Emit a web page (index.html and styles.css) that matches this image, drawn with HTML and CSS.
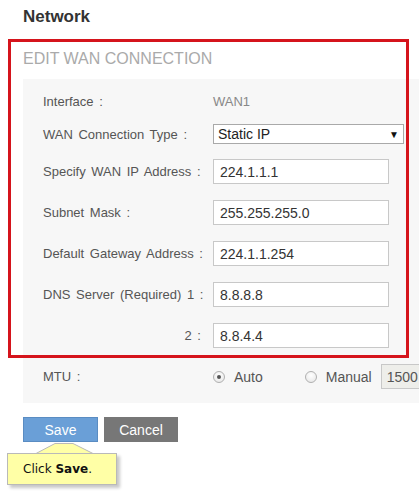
FILE: index.html
```html
<!DOCTYPE html>
<html lang="en">
<head>
  <meta charset="UTF-8" />
  <title>Network ‒ Edit WAN Connection</title>
  <link rel="stylesheet" href="styles.css">
</head>

<body>
  <div class="page">
    <!-- PAGE TITLE -->
    <h1 class="page-title">Network</h1>

    <!-- EDIT WAN FORM -->
    <div class="wan-section">
      <h2 class="section-title">EDIT WAN CONNECTION</h2>

      <div class="panel">
        <div class="row row-info">
          <span class="label">Interface :</span>
          <span class="value">WAN1</span>
        </div>

        <div class="row row-select">
          <span class="label">WAN Connection Type :</span>
          <div class="select">
            <span>Static IP</span>
            <span class="select-arrow">&#9660;</span>
          </div>
        </div>

        <div class="row">
          <span class="label">Specify WAN IP Address :</span>
          <input class="field" type="text" value="224.1.1.1" />
        </div>

        <div class="row">
          <span class="label">Subnet Mask :</span>
          <input class="field" type="text" value="255.255.255.0" />
        </div>

        <div class="row">
          <span class="label">Default Gateway Address :</span>
          <input class="field" type="text" value="224.1.1.254" />
        </div>

        <div class="row">
          <span class="label">DNS Server (Required) 1 :</span>
          <input class="field" type="text" value="8.8.8.8" />
        </div>

        <div class="row">
          <span class="label label-right">2 :</span>
          <input class="field" type="text" value="8.8.4.4" />
        </div>

        <div class="row row-last">
          <span class="label">MTU :</span>
          <span class="radio checked"></span>
          <span class="radio-text radio-auto">Auto</span>
          <span class="radio"></span>
          <span class="radio-text">Manual</span>
          <input class="field field-mtu" type="text" value="1500" />
        </div>
      </div>

      <!-- red highlight around the edited block -->
      <div class="highlight"></div>
    </div>

    <!-- ACTIONS -->
    <div class="actions">
      <button class="btn btn-save">Save</button>
      <button class="btn btn-cancel">Cancel</button>

      <!-- tutorial callout -->
      <div class="callout">
        <svg class="callout-arrow" width="60" height="12" viewBox="0 0 60 12">
          <polygon points="1,11.5 20,1.5 38,1.5 58,11.5" fill="#ffffa6" stroke="#b9b9b9" stroke-width="1" />
        </svg>
        Click <strong>Save</strong>.
      </div>
    </div>
  </div>
</body>
</html>
```

FILE: styles.css
```css
/* Reset */
* {
  margin: 0;
  padding: 0;
  box-sizing: border-box;
}

html,
body {
  height: 100%;
  overflow: hidden;
  background: #fff;
  font-family: 'Liberation Sans', Arial, sans-serif;
  color: #555;
}

.page {
  padding: 6px 0 0 23px;
  width: 419px;
}

/* 1) TITLE */
.page-title {
  font-size: 17px;
  font-weight: bold;
  color: #333;
  line-height: 22px;
}

/* 2) WAN SECTION */
.wan-section {
  position: relative;
  margin-top: 21px;
}

.section-title {
  font-size: 16px;
  font-weight: normal;
  color: #aaa;
  line-height: 20px;
}

/* panel runs off the right edge, like the original page */
.panel {
  margin-top: 10px;
  width: 396px;
  overflow: hidden;
  background: #f7f7f7;
  padding: 14px 0 14px 20px;
}

.row {
  display: flex;
  align-items: center;
  margin-bottom: 16px;
  font-size: 13px;
}

.row-info {
  height: 17px;
  margin-bottom: 14px;
}

.row-select {
  margin-bottom: 15px;
}

.row-last {
  margin-bottom: 0;
}

.label {
  width: 170px;
  flex-shrink: 0;
  color: #555;
  word-spacing: 2px;
}

.label-right {
  text-align: right;
  padding-right: 12px;
}

.value {
  color: #888;
}

/* select box */
.select {
  width: 191px;
  height: 20px;
  border: 1px solid #a9a9a9;
  background: #fff;
  display: flex;
  align-items: center;
  justify-content: space-between;
  padding: 0 4px 0 4px;
  font-size: 14px;
  color: #222;
}

.select-arrow {
  font-size: 10px;
  color: #111;
}

/* text fields */
.field {
  width: 176px;
  height: 25px;
  border: 1px solid #c8c8c8;
  background: #fff;
  padding: 0 6px;
  font-family: 'Liberation Sans', Arial, sans-serif;
  font-size: 14px;
  color: #333;
  outline: none;
  flex-shrink: 0;
}

.field-mtu {
  width: 60px;
  background: #eeeeea;
  color: #555;
  margin-left: 9px;
  padding: 0 5px;
}

/* radios */
.radio {
  width: 12px;
  height: 12px;
  border-radius: 50%;
  border: 1px solid #b0b0b0;
  background: radial-gradient(circle at 50% 35%, #fff 0%, #e4e4e4 100%);
  display: flex;
  align-items: center;
  justify-content: center;
  flex-shrink: 0;
}

.radio.checked::after {
  content: '';
  width: 4px;
  height: 4px;
  border-radius: 50%;
  background: #555;
}

.radio-text {
  margin-left: 9px;
  font-size: 14px;
  color: #555;
  flex-shrink: 0;
}

.radio-auto {
  margin-right: 42px;
}

/* red annotation frame */
.highlight {
  position: absolute;
  left: -15px;
  top: -10px;
  width: 401px;
  height: 319px;
  border: 3px solid #d5141c;
}

/* 3) BUTTONS */
.actions {
  position: relative;
  display: flex;
  gap: 6px;
  margin-top: 14px;
}

.btn {
  width: 75px;
  height: 25px;
  border: none;
  color: #fff;
  font-family: 'Liberation Sans', Arial, sans-serif;
  font-size: 14px;
}

.btn-save {
  background: #6a9fd7;
  border: 1px solid #5a8cc2;
}

.btn-cancel {
  width: 74px;
  background: #777;
}

/* 4) CALLOUT */
.callout {
  position: absolute;
  left: -16px;
  top: 36px;
  width: 110px;
  height: 32px;
  background: #ffffa6;
  border: 1px solid #b9b9b9;
  box-shadow: 3px 3px 3px #c8c8c8;
  font-family: 'DejaVu Sans', Verdana, sans-serif;
  font-size: 12px;
  color: #111;
  line-height: 30px;
  padding-left: 15px;
}

.callout-arrow {
  position: absolute;
  left: 27px;
  top: -12px;
}
```
